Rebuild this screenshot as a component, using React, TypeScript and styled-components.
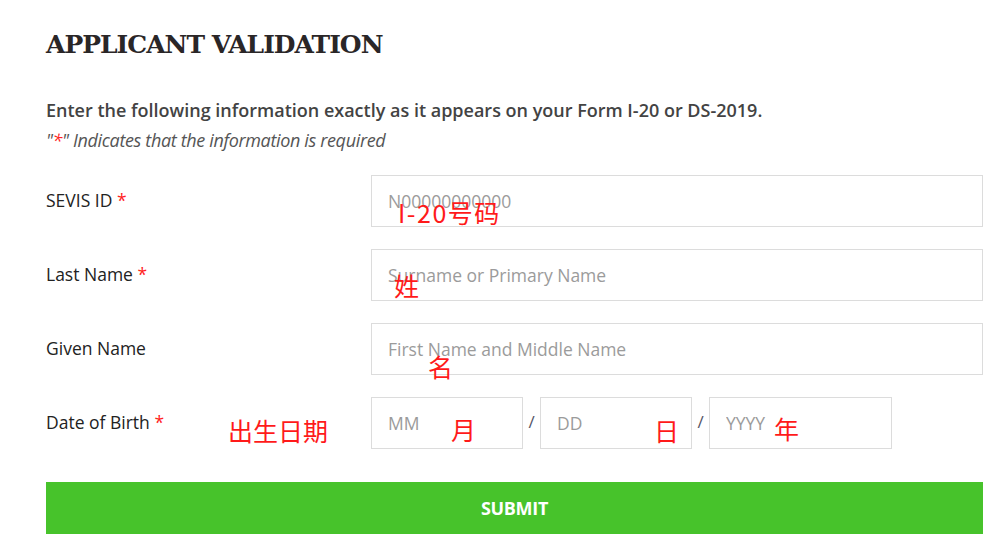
import React from "react";
import styled, { createGlobalStyle } from "styled-components";

const Global = createGlobalStyle`
  html, body { margin: 0; padding: 0; background: #fff; }
  body { font-family: "Open Sans", "Noto Sans", sans-serif; }
  * { box-sizing: border-box; }
`;

const Page = styled.div`
  width: 1007px;
  height: 559px;
  padding: 28px 24px 0 46px;
  overflow: hidden;
`;

const Title = styled.h1`
  margin: 0;
  font-family: "DejaVu Serif", "Liberation Serif", serif;
  font-weight: 700;
  font-size: 25px;
  line-height: 34px;
  color: #2a2627;
  letter-spacing: -1px;
`;

const Intro = styled.p`
  margin: 36px 0 0;
  font-family: "Open Sans", sans-serif;
  font-weight: 600;
  font-size: 18px;
  line-height: 24px;
  color: #434343;
`;

const Note = styled.p`
  margin: 6px 0 0;
  font-family: "Open Sans", sans-serif;
  font-style: italic;
  font-weight: 400;
  font-size: 18px;
  line-height: 24px;
  color: #555;
  letter-spacing: -0.35px;
`;

const Star = styled.span`
  color: #f22;
`;

const Form = styled.form`
  margin-top: 23px;
  display: flex;
  flex-direction: column;
  gap: 22px;
`;

const Row = styled.div`
  position: relative;
  display: grid;
  grid-template-columns: 325px 1fr;
  align-items: start;
`;

const Label = styled.label`
  padding-top: 13px;
  font-family: "Open Sans", sans-serif;
  font-size: 17.5px;
  line-height: 24px;
  color: #222;
`;

const Input = styled.input<{ $w?: number }>`
  width: ${(p) => (p.$w ? `${p.$w}px` : "100%")};
  height: 52px;
  border: 1px solid #dcdcdc;
  border-radius: 0;
  padding: 0 16px;
  font-family: "Open Sans", sans-serif;
  font-size: 17.5px;
  color: #333;
  background: #fff;
  outline: none;
  &::placeholder { color: #9b9b9b; }
`;

const DateGroup = styled.div`
  display: flex;
  align-items: center;
`;

const Slash = styled.span`
  width: 17px;
  text-align: center;
  font-family: "Open Sans", sans-serif;
  font-size: 17px;
  color: #556;
  margin-top: -3px;
`;

const Submit = styled.button`
  margin-top: 11px;
  width: 937px;
  height: 52px;
  border: none;
  background: #47c32b;
  color: #fff;
  font-family: "Open Sans", sans-serif;
  font-weight: 700;
  font-size: 18px;
  letter-spacing: -0.3px;
  cursor: pointer;
`;

const Note2 = styled.span<{ $x: number; $y: number; $ls?: number }>`
  position: absolute;
  left: ${(p) => p.$x}px;
  top: ${(p) => p.$y}px;
  font-family: "Noto Sans CJK SC", sans-serif;
  font-size: 25px;
  line-height: 1;
  letter-spacing: ${(p) => p.$ls ?? 0}px;
  color: #ff1a1a;
  white-space: nowrap;
  pointer-events: none;
`;

export default function App() {
  return (
    <>
      <Global />
      <Page>
        <Title>APPLICANT VALIDATION</Title>
        <Intro>Enter the following information exactly as it appears on your Form I-20 or DS-2019.</Intro>
        <Note>
          "<Star>*</Star>" Indicates that the information is required
        </Note>
        <Form onSubmit={(e) => e.preventDefault()}>
          <Row>
            <Label>
              SEVIS ID <Star>*</Star>
            </Label>
            <Input placeholder="N00000000000" />
            <Note2 $x={352} $y={25} $ls={1.5}>I-20号码</Note2>
          </Row>
          <Row>
            <Label>
              Last Name <Star>*</Star>
            </Label>
            <Input placeholder="Surname or Primary Name" />
            <Note2 $x={348} $y={24}>姓</Note2>
          </Row>
          <Row>
            <Label>Given Name</Label>
            <Input placeholder="First Name and Middle Name" />
            <Note2 $x={382} $y={31}>名</Note2>
          </Row>
          <Row>
            <Label>
              Date of Birth <Star>*</Star>
            </Label>
            <DateGroup>
              <Input $w={152} placeholder="MM" />
              <Slash>/</Slash>
              <Input $w={152} placeholder="DD" />
              <Slash>/</Slash>
              <Input $w={183} placeholder="YYYY" />
            </DateGroup>
            <Note2 $x={182} $y={21}>出生日期</Note2>
            <Note2 $x={405} $y={20}>月</Note2>
            <Note2 $x={608} $y={21}>日</Note2>
            <Note2 $x={728} $y={19}>年</Note2>
          </Row>
          <Submit type="submit">SUBMIT</Submit>
        </Form>
      </Page>
    </>
  );
}
